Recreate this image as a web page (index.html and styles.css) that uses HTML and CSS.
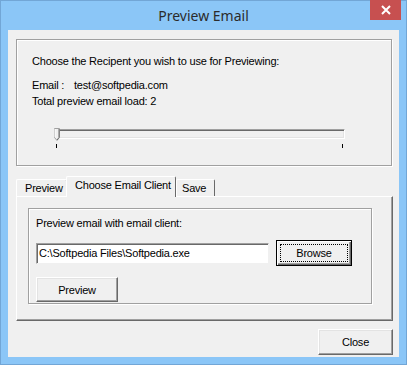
FILE: index.html
```html
<!DOCTYPE html>
<html lang="en">
  <head>
    <meta charset="UTF-8" />
    <title>Preview Email</title>
    <link rel="stylesheet" href="styles.css">
  </head>
  <body>
    <div class="window">
      <div class="titlebar">
        <span></span>
        <span class="title">Preview Email</span>
        <div class="close-x">
          <svg width="10" height="10" viewBox="0 0 10 10">
            <path d="M1 1 L9 9 M9 1 L1 9" stroke="#fff" stroke-width="2" />
          </svg>
        </div>
      </div>

      <div class="client">
        <div class="group recipient">
          <p class="line first">Choose the Recipent you wish to use for Previewing:</p>
          <p class="line email"><span class="lbl">Email :</span>test@softpedia.com</p>
          <p class="line">Total preview email load: 2</p>

          <div class="slider">
            <div class="track"></div>
            <svg class="thumb" width="6" height="13" viewBox="0 0 6 13">
              <path d="M0.5 0.5 H5.5 V9.5 L3 12.5 L0.5 9.5 Z" fill="#f0f0f0" stroke="#a0a0a0" />
              <path d="M1 1 V9" stroke="#fff" />
              <path d="M5 1 V9.5 L3 12" stroke="#696969" fill="none" />
            </svg>
            <div class="ticks"><span></span><span></span></div>
          </div>
        </div>

        <div class="tabs">
          <div class="tab t-preview">Preview</div>
          <div class="tab active">Choose Email Client</div>
          <div class="tab t-save">Save</div>
        </div>
        <div class="tab-panel">
          <div class="group mail-client">
            <p class="line">Preview email with email client:</p>
            <div class="path-row">
              <div class="textbox">C:\Softpedia Files\Softpedia.exe</div>
              <button class="btn default"><span class="focus">Browse</span></button>
            </div>
            <button class="btn preview">Preview</button>
          </div>
        </div>

        <div class="footer">
          <button class="btn close">Close</button>
        </div>
      </div>
    </div>
  </body>
</html>
```

FILE: styles.css
```css
* {
  margin: 0;
  padding: 0;
  box-sizing: border-box;
}
body {
  background-color: #8bc6f7;
  font-family: "Liberation Sans", Arial, sans-serif;
  font-size: 11px;
  letter-spacing: -0.2px;
  color: #000;
}
.window {
  width: 407px;
  height: 365px;
  background-color: #8bc6f7;
  border: 1px solid #72a6d6;
}
.titlebar {
  height: 29px;
  display: grid;
  grid-template-columns: 1fr auto 1fr;
}
.title {
  font-family: "Noto Sans", "Open Sans", sans-serif;
  font-size: 14px;
  letter-spacing: 0;
  color: #2b2b2b;
  line-height: 29px;
}
.close-x {
  justify-self: end;
  width: 31px;
  height: 20px;
  margin-top: -1px;
  margin-right: 5px;
  background-color: #c75050;
  display: flex;
  align-items: center;
  justify-content: center;
}
.client {
  width: 391px;
  height: 327px;
  margin-left: 7px;
  background-color: #f0f0f0;
  padding: 9px 0 0 8px;
}
.line {
  line-height: 13px;
  white-space: nowrap;
}

/* etched group box */
.group {
  border: 1px solid #a0a0a0;
  box-shadow: inset 1px 1px 0 #fff, 1px 1px 0 #fff;
}
.recipient {
  width: 376px;
  height: 127px;
  padding: 15px 0 0 15px;
}
.recipient .email {
  margin-top: 11px;
}
.recipient .line + .line:last-of-type {
  margin-top: 3px;
}
.lbl {
  display: inline-block;
  width: 42px;
}

.slider {
  position: relative;
  margin: 21px 0 0 24px;
  width: 289px;
}
.track {
  height: 10px;
  border-top: 1px solid #a0a0a0;
  border-left: 1px solid #a0a0a0;
  border-bottom: 1px solid #fff;
  border-right: 1px solid #fff;
  box-shadow: inset 1px 1px 0 #696969, inset -1px -1px 0 #e3e3e3;
}
.thumb {
  position: absolute;
  left: -2px;
  top: -1px;
}
.ticks {
  display: flex;
  justify-content: space-between;
  margin-top: 5px;
  padding-right: 2px;
}
.ticks span {
  width: 1px;
  height: 4px;
  background-color: #000;
}

/* tabs */
.tabs {
  display: flex;
  align-items: flex-end;
  height: 21px;
  margin-top: 9px;
}
.tab {
  height: 17px;
  padding: 2px 0 0 8px;
  border-top: 1px solid #fff;
  border-left: 1px solid #fff;
  border-right: 1px solid #696969;
  border-radius: 2px 2px 0 0;
  white-space: nowrap;
}
.t-preview {
  width: 51px;
}
.t-save {
  width: 39px;
  padding-left: 5px;
}
.tab.active {
  width: 110px;
  height: 21px;
  padding: 2px 0 0 8px;
  margin: 0 0 -1px -1px;
  background-color: #f0f0f0;
  position: relative;
}
.tab-panel {
  width: 377px;
  height: 125px;
  border-top: 1px solid #fff;
  border-left: 1px solid #fff;
  border-right: 1px solid #696969;
  border-bottom: 1px solid #696969;
  box-shadow: inset -1px -1px 0 #a0a0a0;
  padding: 11px 0 0 11px;
}
.mail-client {
  width: 344px;
  height: 96px;
  padding: 8px 0 0 7px;
}
.path-row {
  display: flex;
  align-items: center;
  gap: 7px;
  margin-top: 10px;
}
.textbox {
  width: 233px;
  height: 21px;
  background-color: #fff;
  border-top: 1px solid #a0a0a0;
  border-left: 1px solid #a0a0a0;
  border-bottom: 1px solid #f0f0f0;
  border-right: 1px solid #f0f0f0;
  box-shadow: inset 1px 1px 0 #696969;
  padding: 3px 0 0 2px;
  white-space: nowrap;
  overflow: hidden;
}

/* classic buttons */
.btn {
  font-family: inherit;
  font-size: 11px;
  letter-spacing: -0.2px;
  color: #000;
  background-color: #f0f0f0;
  border: 1px solid;
  border-color: #fff #696969 #696969 #fff;
  box-shadow: inset -1px -1px 0 #a0a0a0, inset 1px 1px 0 #e3e3e3;
  display: flex;
  align-items: center;
  justify-content: center;
}
.btn.default {
  width: 76px;
  height: 26px;
  border-color: #000;
  box-shadow: inset 1px 1px 0 #fff, inset -1px -1px 0 #696969, inset -2px -2px 0 #a0a0a0;
  padding: 3px;
}
.focus {
  flex: 1;
  align-self: stretch;
  border: 1px dotted #000;
  display: flex;
  align-items: center;
  justify-content: center;
}
.btn.preview {
  width: 82px;
  height: 25px;
  margin-top: 11px;
}
.footer {
  display: flex;
  justify-content: flex-end;
  width: 377px;
  margin-top: 8px;
}
.btn.close {
  width: 75px;
  height: 26px;
}
```
